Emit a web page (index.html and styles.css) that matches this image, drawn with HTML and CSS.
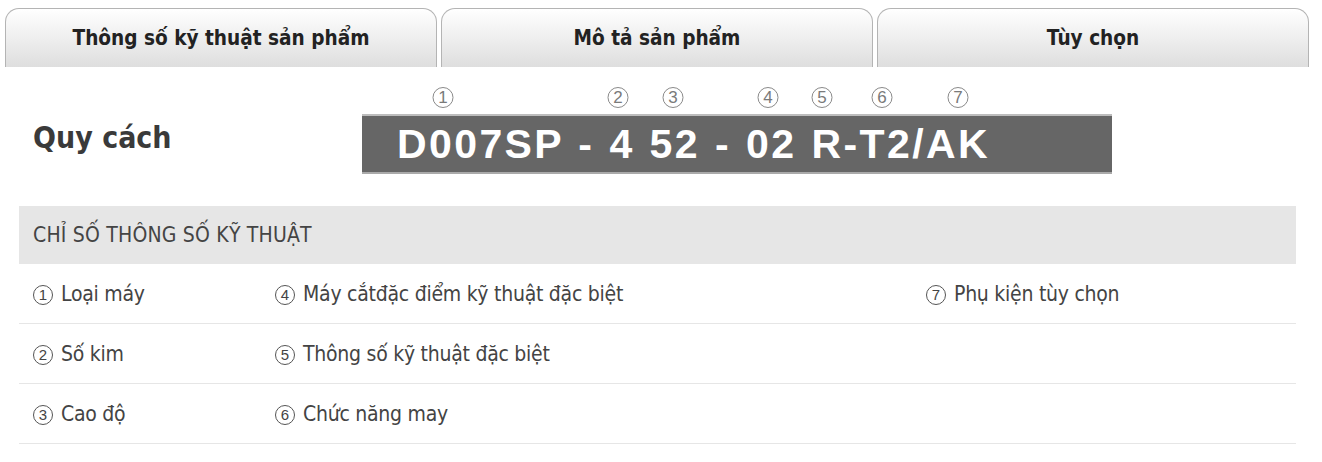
FILE: index.html
```html
<!DOCTYPE html>
<html lang="vi">
<head>
<meta charset="utf-8">
<title>Quy cách</title>
<link rel="stylesheet" href="styles.css">
</head>
<body>
<div class="tabs">
  <div class="tab">Thông số kỹ thuật sản phẩm</div>
  <div class="tab">Mô tả sản phẩm</div>
  <div class="tab">Tùy chọn</div>
</div>
<div class="spec">
  <h2 class="spec-title">Quy cách</h2>
  <div class="code-figure">
    <div class="marks">
      <span class="mark" style="left:81px">1</span>
      <span class="mark" style="left:256px">2</span>
      <span class="mark" style="left:311px">3</span>
      <span class="mark" style="left:406px">4</span>
      <span class="mark" style="left:460px">5</span>
      <span class="mark" style="left:520px">6</span>
      <span class="mark" style="left:596px">7</span>
    </div>
    <div class="code">D007SP - 4 52 - 02 R-T2/AK</div>
  </div>
</div>
<div class="table">
  <div class="thead">CHỈ SỐ THÔNG SỐ KỸ THUẬT</div>
  <div class="row">
    <div class="cell c1"><span class="n">1</span>Loại máy</div>
    <div class="cell c2"><span class="n">4</span>Máy cắtđặc điểm kỹ thuật đặc biệt</div>
    <div class="cell c3"><span class="n">7</span>Phụ kiện tùy chọn</div>
  </div>
  <div class="row">
    <div class="cell c1"><span class="n">2</span>Số kim</div>
    <div class="cell c2"><span class="n">5</span>Thông số kỹ thuật đặc biệt</div>
    <div class="cell c3"></div>
  </div>
  <div class="row">
    <div class="cell c1"><span class="n">3</span>Cao độ</div>
    <div class="cell c2"><span class="n">6</span>Chức năng may</div>
    <div class="cell c3"></div>
  </div>
</div>
</body>
</html>
```
FILE: styles.css
```css
html, body { margin: 0; padding: 0; background: #fff; }
body {
  font-family: "DejaVu Sans Condensed", "DejaVu Sans", sans-serif;
  color: #333;
  width: 1322px;
  height: 462px;
  overflow: hidden;
}
.tabs {
  display: flex;
  gap: 4px;
  padding: 8px 13px 0 5px;
  height: 67px;
  box-sizing: border-box;
}
.tab {
  flex: 1;
  border: 1px solid #b4b4b4;
  border-bottom: none;
  border-radius: 14px 14px 0 0;
  background: linear-gradient(#ffffff, #dedede);
  display: flex;
  align-items: center;
  justify-content: center;
  font-weight: bold;
  font-size: 20.6px;
  color: #222;
  padding-bottom: 1px;
}
.spec {
  display: flex;
  align-items: flex-start;
  padding: 0 0 0 33px;
  height: 139px;
}
.spec-title {
  margin: 54px 0 0 0;
  font-size: 30px;
  font-weight: bold;
  color: #3a3a3a;
  width: 329px;
  line-height: 34px;
}
.code-figure {
  position: relative;
  width: 750px;
  padding-top: 47px;
}
.marks { position: absolute; left: 0; top: 20px; height: 22px; width: 100%; }
.mark {
  position: absolute;
  top: 0;
  width: 19px;
  height: 19px;
  border: 1.2px solid #8a8a8a;
  border-radius: 50%;
  font-family: "Liberation Sans", Arial, sans-serif;
  font-size: 17px;
  line-height: 19px;
  text-align: center;
  color: #7a7a7a;
  transform: translateX(-50%);
}
.code {
  height: 56px;
  background: #666;
  border-top: 2px solid #bdbdbd;
  border-bottom: 2px solid #aaa;
  color: #fff;
  font-family: "Liberation Sans", Arial, sans-serif;
  font-weight: bold;
  font-size: 41px;
  line-height: 56px;
  padding-left: 35px;
  letter-spacing: 2.4px;
  word-spacing: 1.2px;
}
.table {
  margin: 0 26px 0 19px;
}
.thead {
  background: #e6e6e6;
  height: 58px;
  line-height: 58px;
  padding-left: 14px;
  font-size: 21px;
  letter-spacing: 0.2px;
  color: #444;
}
.row {
  display: flex;
  height: 60px;
  align-items: center;
  border-bottom: 1px solid #e6e6e6;
  box-sizing: border-box;
  font-size: 21px;
  letter-spacing: -0.25px;
  color: #444;
}
.cell { display: flex; align-items: center; }
.c1 { width: 242px; padding-left: 14px; }
.c2 { width: 651px; }
.c3 { flex: 1; }
.n {
  width: 18px;
  height: 18px;
  border: 1px solid #555;
  border-radius: 50%;
  font-family: "Liberation Sans", Arial, sans-serif;
  font-size: 15px;
  line-height: 18px;
  text-align: center;
  letter-spacing: 0;
  color: #444;
  margin-right: 8px;
  margin-top: 3px;
}
```
